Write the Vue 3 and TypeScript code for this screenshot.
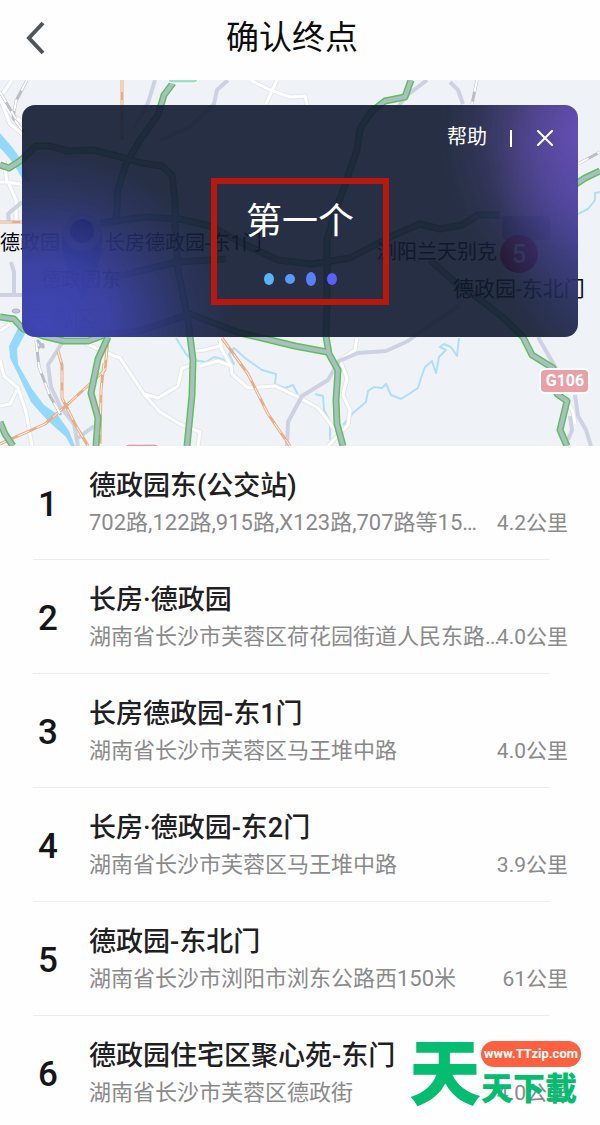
<script setup lang="ts">
interface Place {
  name: string
  address: string
  distance: string
}

const places: Place[] = [
  { name: '德政园东(公交站)', address: '702路,122路,915路,X123路,707路等15…', distance: '4.2公里' },
  { name: '长房·德政园', address: '湖南省长沙市芙蓉区荷花园街道人民东路…', distance: '4.0公里' },
  { name: '长房德政园-东1门', address: '湖南省长沙市芙蓉区马王堆中路', distance: '4.0公里' },
  { name: '长房·德政园-东2门', address: '湖南省长沙市芙蓉区马王堆中路', distance: '3.9公里' },
  { name: '德政园-东北门', address: '湖南省长沙市浏阳市浏东公路西150米', distance: '61公里' },
  { name: '德政园住宅区聚心苑-东门', address: '湖南省长沙市芙蓉区德政街', distance: '4.0公里' },
]

const rivers: string[] = [
  'M176 338L186 354L192 360L206 362L214 357L225 360L234 364L229 354L234 348L245 358L262 370L276 374L275 384L285 388L293 385L298 395',
  'M315 394L323 396L324 410L330 422V440',
  'M343 425L353 413L366 402L368 391L374 387L382 388L386 384L391 395L401 399L412 392L418 388L421 378L425 367L432 361L436 373L439 357L446 350L440 347L444 344L451 347L457 356L459 338',
  'M578 214L588 209L595 200V193L600 192',
]

const minorRoads: string[] = [
  'M12 80L0 98L12 115L22 122',
  'M0 98L10 124L32 142',
  'M4 160L7 182L20 184M0 182H8L16 200V222',
  'M250 80L270 90L290 97L305 96L308 108M277 80L266 104',
  'M0 331L10 324M0 360L4 376L18 388L26 412L32 446M0 406L10 404L17 390',
  'M85 343L100 350L120 358L144 394L160 412L180 424L200 432L198 446',
  'M144 394L158 398L178 386L182 368L196 364',
  'M220 338L221 348L231 366L232 374L248 388L275 386L298 397L318 408L326 418L335 430',
  'M188 352L204 350L220 346M200 366L218 361L231 366',
  'M357 338L355 350L340 360L347 378L343 395L350 410L348 425L328 446',
  'M563 393L573 412L575 424',
]

const greyRoads: string[] = [
  'M155 80L148 103L134 128',
  'M228 80L217 90L214 104L190 127L160 140',
  'M427 80L405 97L395 112',
  'M450 82L458 90L463 104',
  'M0 295H22M11 262L14 272V295M9 222L8 214L22 202',
  'M62 343L48 365L51 387L60 406L74 424L78 446M78 438L94 426',
  'M460 305L430 325L408 341L386 351L358 353L339 361L328 380L302 396L288 422L287 446',
  'M538 337L558 372M575 395L578 416L586 430L591 446M570 416L572 430L568 440',
]

const rails: string[] = [
  'M122 80V140',
  'M0 222H22',
  'M58 351L62 365V398L75 424L88 446',
  'M0 444L45 424L68 404L105 370L108 338',
  'M104 363L101 390L100 444',
  'M222 338L248 374L268 414L290 446',
]

const greyRails: string[] = ['M27 80L16 101L13 118L24 132', 'M36 340L39 367L50 396L61 415', 'M477 80L472 104', 'M578 164L600 152', 'M0 92L16 119']

const highways: string[] = [
  'M0 165L9 168L20 161L36 146L49 146L68 151L93 150L117 156L142 163L162 166L172 175L175 200V225L178 270L188 320L193 360L192 395L187 446',
  'M173 83L164 95L158 115L140 140L126 164L118 190L116 220',
  'M411 80L405 97L385 101L371 112L360 129L357 150L345 185L335 212L327 240L327 300L326 336L329 354L338 370L336 400L337 424L343 446',
  'M0 317L14 319L23 329L43 336L64 341L88 341L107 334L140 331L190 314L240 333L266 339L295 346L327 352',
  'M108 337L98 359L91 393L98 418L96 446',
  'M0 422L5 434L13 446',
  'M100 223L145 217L180 219L210 226L248 246L278 260L312 264L350 258L392 236L420 224L440 229L462 225L478 215L500 215',
  'M108 280L135 272L178 262L226 259',
  'M430 260L456 283L478 298L506 320L523 337L532 355L553 368L557 394L567 401L560 430L567 446',
  'M576 184L585 178L600 171',
]
</script>

<template>
  <main class="page">
    <header class="bar">
      <button class="back" type="button" aria-label="返回">
        <svg viewBox="0 0 20 34" width="20" height="34" aria-hidden="true">
          <path d="M17 2L3 17L17 32" fill="none" stroke="#50545b" stroke-width="4" />
        </svg>
      </button>
      <h1>确认终点</h1>
    </header>

    <section class="map">
      <svg class="canvas" viewBox="0 80 600 366" preserveAspectRatio="xMidYMid slice" aria-hidden="true">
        <rect y="80" width="600" height="366" fill="#eff3f8" />
        <path d="M0 133C12 148 20 152 30 182L22 178C12 160 6 154 0 148Z" fill="#94d9fd" />
        <path d="M18 328L9 346L10 358L18 374L31 402L47 420L66 437L71 446H75L69 431L57 414L44 405L32 389L18 364L17 349L25 334Z" fill="#94d9fd" />
        <g fill="none" stroke-linejoin="round">
          <g stroke="#aedef8" stroke-width="2">
            <path v-for="d in rivers" :key="d" :d="d" />
          </g>
          <g stroke="#e2e5ea" stroke-width="5">
            <path v-for="d in minorRoads" :key="d" :d="d" />
          </g>
          <g stroke="#ffffff" stroke-width="3">
            <path v-for="d in minorRoads" :key="d" :d="d" />
          </g>
          <g stroke="#cdd2e2" stroke-width="4">
            <path v-for="d in greyRoads" :key="d" :d="d" />
          </g>
          <g stroke="#e9ad86" stroke-width="3">
            <path v-for="d in rails" :key="d" :d="d" />
          </g>
          <g stroke="#fff6ee" stroke-width="1" stroke-dasharray="12 8">
            <path v-for="d in rails" :key="d" :d="d" />
          </g>
          <g stroke="#b9bdc5" stroke-width="3">
            <path v-for="d in greyRails" :key="d" :d="d" />
          </g>
          <g stroke="#ffffff" stroke-width="2" stroke-dasharray="12 10">
            <path v-for="d in greyRails" :key="d" :d="d" />
          </g>
          <g stroke="#5fc057" stroke-width="7">
            <path v-for="d in highways" :key="d" :d="d" />
          </g>
          <g stroke="#a9bfc3" stroke-width="4">
            <path v-for="d in highways" :key="d" :d="d" />
          </g>
        </g>
        <ellipse cx="16" cy="311" rx="4" ry="2" fill="#c4c9dc" stroke="#aab0c9" />
        <path d="M37 340L44 348M38 348L44 344" stroke="#b9bdc5" stroke-width="3" />
        <rect x="168" y="70" width="30" height="13" rx="4" fill="#a0dfc3" stroke="#ffffff" />
        <rect x="125" y="444" width="34" height="14" rx="4" fill="#ec9da4" stroke="#ffffff" />
        <rect x="502" y="216" width="48" height="24" rx="4" fill="#9aa2cc" />
        <rect x="540" y="369" width="49" height="24" rx="5" fill="#e9a1a7" stroke="#ffffff" stroke-width="2" />
        <text class="road-tag" x="565" y="386">G106</text>
        <path d="M82 302C74 284 60 262 62 236A20 20 0 1 1 102 236C104 262 90 284 82 302Z" fill="#5087ee" />
        <circle cx="82" cy="232" r="19" fill="#c4d4f6" />
        <circle cx="82" cy="231" r="12" fill="#0040d0" />
        <circle cx="519" cy="254" r="19" fill="#d0002c" />
        <text class="pin" x="519" y="263">5</text>
        <g class="labels">
          <text x="0" y="250">德政园</text>
          <text x="105" y="250">长房德政园-东1门</text>
          <text x="41" y="287">德政园东</text>
          <text x="377" y="259">浏阳兰天别克</text>
          <text class="wide" x="453" y="296">德政园-东北门</text>
        </g>
        <text class="district" x="29" y="326">天心区</text>
      </svg>

      <div class="panel">
        <div class="tools">
          <button class="help" type="button">帮助</button>
          <span class="divider"></span>
          <button class="close" type="button" aria-label="关闭">
            <svg viewBox="0 0 16 16" width="16" height="16" aria-hidden="true">
              <path d="M1 1L15 15M15 1L1 15" stroke="#ffffff" stroke-width="2" stroke-linecap="round" />
            </svg>
          </button>
        </div>
        <div class="answer">
          <p>第一个</p>
          <svg viewBox="0 0 76 16" width="76" height="16" aria-hidden="true">
            <ellipse cx="7" cy="8" rx="5" ry="6" fill="#56b5fa" />
            <ellipse cx="28" cy="8" rx="5" ry="5" fill="#579afa" />
            <ellipse cx="49" cy="8" rx="5" ry="7" fill="#587ffa" />
            <ellipse cx="70" cy="8" rx="5" ry="6" fill="#5a60fb" />
          </svg>
        </div>
      </div>
    </section>

    <ol class="places">
      <li v-for="(place, index) in places" :key="index">
        <button class="place" type="button">
          <span class="rank">{{ index + 1 }}</span>
          <span class="name">{{ place.name }}</span>
          <span class="detail">
            <span class="address">{{ place.address }}</span>
            <span class="distance">{{ place.distance }}</span>
          </span>
        </button>
      </li>
    </ol>

    <aside class="brand">
      <span class="brand-mark">天</span>
      <div class="brand-side">
        <a class="brand-link" href="#">www.TTzip.com</a>
        <span class="brand-name">天下載</span>
      </div>
    </aside>
  </main>
</template>

<style>
body {
  margin: 0;
  background: #fefefe;
}
</style>

<style scoped>
.page {
  position: relative;
  overflow: hidden;
  background: #fefefe;
  color: #1f2022;
  font-family: Roboto, "Noto Sans CJK SC", sans-serif;
}

button {
  margin: 0;
  padding: 0;
  border: 0;
  background: none;
  color: inherit;
  font: inherit;
  cursor: pointer;
}

svg {
  display: block;
}

.bar {
  display: grid;
  grid-template-columns: 48px 1fr 48px;
  align-items: center;
  height: 80px;
  box-sizing: border-box;
  padding: 0 34px 4px 18px;
}

.back {
  padding: 0 8px;
}

h1 {
  margin: 0;
  color: #0c0c0d;
  font-size: 33px;
  font-weight: 400;
  line-height: 48px;
  text-align: center;
}

.map {
  position: relative;
  padding: 25px 22px 109px;
}

.canvas {
  position: absolute;
  inset: 0;
  width: 100%;
  height: 100%;
}

.labels {
  fill: #000000;
  font-size: 20px;
}

.wide {
  font-size: 21px;
}

.district {
  fill: #7f88a0;
  font-size: 22px;
}

.road-tag {
  fill: #ffffff;
  font-size: 16px;
  font-weight: 700;
  text-anchor: middle;
}

.pin {
  fill: #ffffff;
  font-size: 25px;
  font-weight: 500;
  text-anchor: middle;
}

.panel {
  position: relative;
  height: 232px;
  border-radius: 13px;
  background:
    radial-gradient(ellipse 150px 170px at 102% 12%, rgba(108, 82, 190, 0.9), rgba(108, 82, 190, 0.55) 40%, rgba(108, 82, 190, 0.15) 75%, rgba(108, 82, 190, 0) 100%),
    radial-gradient(ellipse 110px 170px at 105% 45%, rgba(74, 74, 190, 0.75), rgba(74, 74, 190, 0.35) 50%, rgba(74, 74, 190, 0) 100%),
    radial-gradient(ellipse 190px 175px at 4% 94%, rgba(66, 72, 192, 0.9), rgba(66, 72, 192, 0.75) 35%, rgba(66, 72, 192, 0.25) 72%, rgba(66, 72, 192, 0) 100%),
    rgba(18, 27, 48, 0.91);
  color: #ffffff;
}

.tools {
  display: flex;
  align-items: center;
  justify-content: flex-end;
  padding: 17px 25px 0 0;
  height: 30px;
}

.help {
  font-size: 20px;
  line-height: 30px;
}

.divider {
  width: 2px;
  height: 17px;
  margin: 2px 25px 0 23px;
  background: #ffffff;
}

.close {
  margin-top: 2px;
}

.answer {
  display: flex;
  flex-direction: column;
  align-items: center;
  width: 166px;
  height: 115px;
  margin: 26px auto 0;
  border: 6px solid #b8190e;
}

.answer p {
  margin: 11px 0 22px;
  font-size: 36px;
  line-height: 54px;
}

.places {
  margin: 0;
  padding: 0;
  list-style: none;
}

.places li:not(:last-child)::after {
  content: "";
  display: block;
  height: 1px;
  margin: 0 50px 0 33px;
  background: #ececec;
}

.place {
  display: grid;
  grid-template-columns: 30px minmax(0, 1fr);
  column-gap: 26px;
  row-gap: 4px;
  width: 100%;
  padding: 22px 32px 21px 33px;
  text-align: left;
}

li:last-child .place {
  padding-bottom: 17px;
}

.rank {
  grid-row: 1 / span 2;
  align-self: center;
  padding-top: 4px;
  color: #151617;
  font-size: 35px;
  font-weight: 500;
  line-height: 44px;
  text-align: center;
}

.name {
  font-size: 27px;
  font-weight: 500;
  line-height: 36px;
}

.detail {
  display: flex;
  justify-content: space-between;
  color: #8a8a8a;
  font-size: 22px;
  line-height: 30px;
  white-space: nowrap;
}

.address {
  flex: 1;
  min-width: 0;
}

.distance {
  flex: none;
  font-size: 21px;
}

.brand {
  position: absolute;
  right: 19px;
  bottom: 22px;
  display: flex;
  align-items: flex-end;
  color: #05bd70;
  font-family: "Noto Sans CJK TC", sans-serif;
  font-weight: 900;
}

.brand-mark {
  font-size: 72px;
  line-height: 70px;
}

.brand-side {
  display: flex;
  flex-direction: column;
  gap: 2px;
}

.brand-link {
  padding: 0 3px;
  border-radius: 13px;
  background: #ff6040;
  color: #ffffff;
  font-family: Roboto, sans-serif;
  font-size: 13px;
  font-weight: 700;
  line-height: 26px;
  text-align: center;
  text-decoration: none;
}

.brand-name {
  font-size: 32px;
  line-height: 34px;
}
</style>
